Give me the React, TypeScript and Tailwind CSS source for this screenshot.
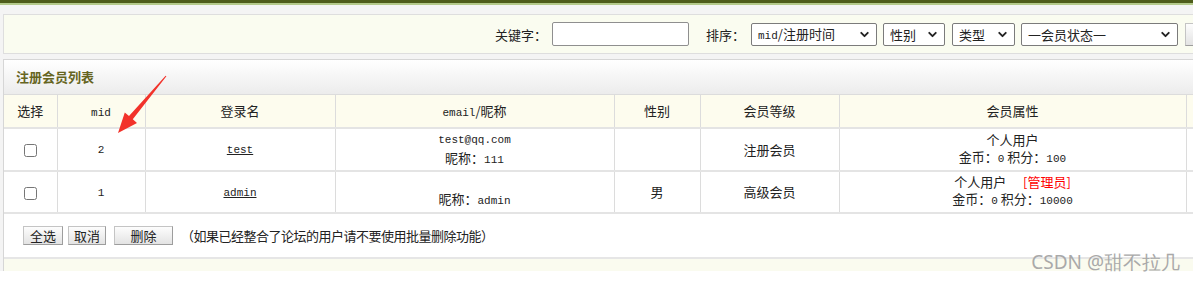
import React from 'react';
import { ChevronDown } from 'lucide-react';

const Select = ({ className, children }: { className: string; children: React.ReactNode }) => (
    <div className={`shrink-0 flex items-center justify-between h-[23px] border border-[#7b7b7b] rounded-[2px] bg-white pl-[6px] pr-[5px] ${className}`}>
        <span className="text-[13px] leading-none text-[#222]">{children}</span>
        <ChevronDown className="w-[13px] h-[13px] text-[#222]" strokeWidth={3.5} />
    </div>
);

const Btn = ({ className, children }: { className: string; children: React.ReactNode }) => (
    <button className={`shrink-0 h-[19px] border border-[#c4c4c4] border-r-[#9d9d9d] border-b-[#9d9d9d] bg-linear-to-b from-[#fdfdfd] to-[#e3e3e3] text-[13px] leading-none text-[#222] ${className}`}>
        {children}
    </button>
);

const M = ({ children }: { children: React.ReactNode }) => (
    <span className="font-['Liberation_Mono',monospace] text-[11px]">{children}</span>
);

const th = 'border border-[#dcdcdc] font-normal text-[13px] text-[#222] text-center';
const td = 'border-x border-[#dcdcdc] border-y-2 border-y-[#e4e4e4] text-[13px] text-[#222] text-center leading-[17px]';

export default function App() {
    return (
        <div className="relative w-[1193px] h-[282px] overflow-hidden bg-white font-['Noto_Sans_CJK_SC',sans-serif] text-[#222]">
            <div className="h-[3px] bg-[#4e5d1b]" />
            <div className="h-[2px] bg-[#b4ca8b]" />

            <div className="bg-[#f4f4f4] pl-[3px] pt-[9px]">
                {/* search bar */}
                <div className="w-[1210px] h-[40px] border border-[#dedede] bg-[#fafcf0] flex items-center pl-[491px]">
                    <span className="shrink-0 w-[57px] text-[13px] leading-none">关键字：</span>
                    <div className="shrink-0 w-[137px] h-[24px] border border-[#8f8f8f] rounded-[2px] bg-white" />
                    <span className="shrink-0 ml-[17px] w-[45px] text-[13px] leading-none">排序：</span>
                    <Select className="w-[126px]"><M>mid</M>/注册时间</Select>
                    <Select className="ml-[6px] w-[62px]">性别</Select>
                    <Select className="ml-[7px] w-[63px]">类型</Select>
                    <Select className="ml-[6px] w-[157px]">一会员状态一</Select>
                    <Btn className="ml-[7px] w-[40px] h-[23px]">{' '}</Btn>
                </div>

                {/* list panel */}
                <div className="mt-[5px] w-[1210px] border-l border-t border-[#d6d6d6] bg-white">
                    <div className="h-[34px] flex items-center pl-[12px] bg-linear-to-b from-white to-[#ececec]">
                        <span className="text-[13px] font-bold text-[#66651f]">注册会员列表</span>
                    </div>

                    <table className="border-collapse table-fixed w-[1210px]">
                        <colgroup>
                            <col className="w-[53px]" />
                            <col className="w-[88px]" />
                            <col className="w-[190px]" />
                            <col className="w-[279px]" />
                            <col className="w-[86px]" />
                            <col className="w-[139px]" />
                            <col className="w-[347px]" />
                            <col />
                        </colgroup>
                        <thead>
                            <tr className="h-[33px] bg-[#fdfcee]">
                                <th className={`${th} border-l-0`}>选择</th>
                                <th className={th}><M>mid</M></th>
                                <th className={th}>登录名</th>
                                <th className={th}><M>email</M>/昵称</th>
                                <th className={th}>性别</th>
                                <th className={th}>会员等级</th>
                                <th className={th}>会员属性</th>
                                <th className={th}></th>
                            </tr>
                        </thead>
                        <tbody>
                            <tr className="h-[43px]">
                                <td className={`${td} border-l-0`}>
                                    <input type="checkbox" className="w-[13px] h-[13px] align-middle" />
                                </td>
                                <td className={td}><M>2</M></td>
                                <td className={td}><span className="underline"><M>test</M></span></td>
                                <td className={td}>
                                    <div><M>test@qq.com</M></div>
                                    <div>昵称：<M>111</M></div>
                                </td>
                                <td className={td}></td>
                                <td className={td}>注册会员</td>
                                <td className={td}>
                                    <div>个人用户</div>
                                    <div>金币：<M>0</M> 积分：<M>100</M></div>
                                </td>
                                <td className={td}></td>
                            </tr>
                            <tr className="h-[42px]">
                                <td className={`${td} border-l-0`}>
                                    <input type="checkbox" className="w-[13px] h-[13px] align-middle" />
                                </td>
                                <td className={td}><M>1</M></td>
                                <td className={td}><span className="underline"><M>admin</M></span></td>
                                <td className={td}>
                                    <div>&nbsp;</div>
                                    <div>昵称：<M>admin</M></div>
                                </td>
                                <td className={td}>男</td>
                                <td className={td}>高级会员</td>
                                <td className={td}>
                                    <div>个人用户 <span className="ml-[14px] text-[#ff0000]">[管理员]</span></div>
                                    <div>金币：<M>0</M> 积分：<M>10000</M></div>
                                </td>
                                <td className={td}></td>
                            </tr>
                        </tbody>
                    </table>

                    <div className="h-[43px] flex items-center pl-[19px] gap-[5px]">
                        <Btn className="w-[40px]">全选</Btn>
                        <Btn className="w-[38px]">取消</Btn>
                        <Btn className="ml-[3px] w-[59px]">删除</Btn>
                        <span className="ml-[3px] text-[13px] leading-none tracking-[-0.5px]">（如果已经整合了论坛的用户请不要使用批量删除功能）</span>
                    </div>
                    <div className="h-[14px] border-t-2 border-[#e6e6e6] bg-[#fafbef]" />
                </div>
            </div>

            {/* annotation arrow */}
            <svg className="absolute left-0 top-0 pointer-events-none" width="1193" height="282">
                <polygon
                    points="166.4,76.3 132.8,119.3 137,122.9 118,133 124.8,112.5 129,116.1 165.6,75.7"
                    fill="#f2322a"
                />
            </svg>

            {/* watermark */}
            <div className="absolute right-[13px] top-[250px] text-[19px] leading-[24px] text-[#a9a9a9] font-['Noto_Sans',sans-serif]">
                CSDN @甜不拉几
            </div>
        </div>
    );
}
